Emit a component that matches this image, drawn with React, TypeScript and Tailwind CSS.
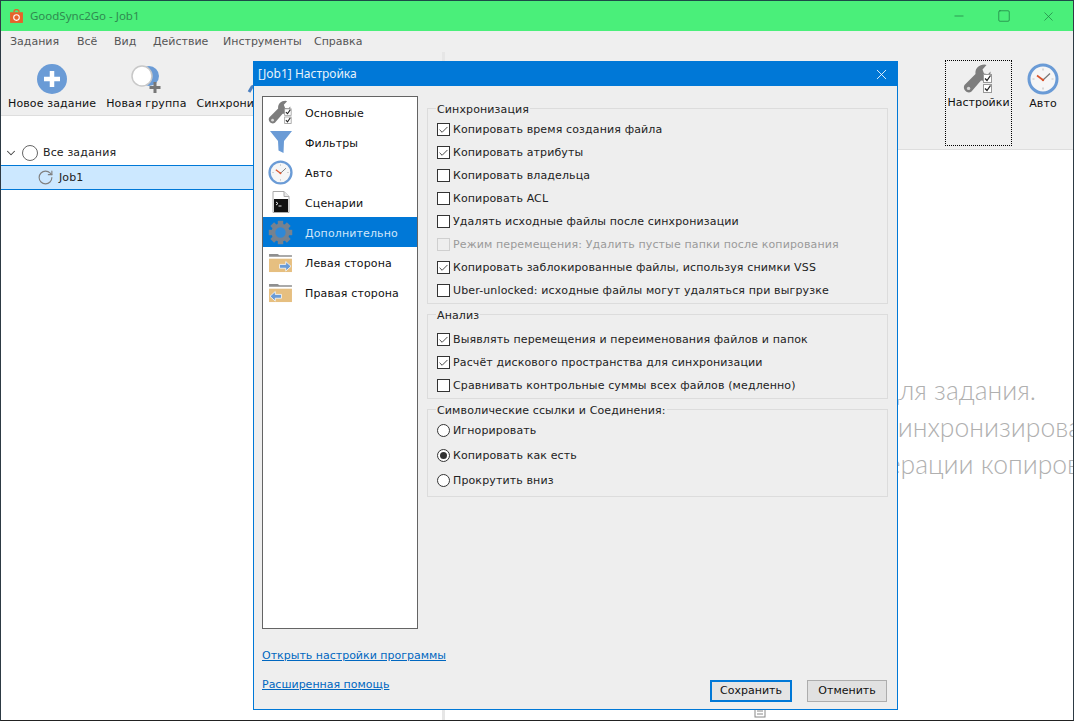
import { X, Minus, Square, ChevronDown, RotateCw, Check } from "lucide-react";

const syncOptions = [
  { label: "Копировать время создания файла", checked: true },
  { label: "Копировать атрибуты", checked: true },
  { label: "Копировать владельца" },
  { label: "Копировать ACL" },
  { label: "Удалять исходные файлы после синхронизации" },
  { label: "Режим перемещения: Удалить пустые папки после копирования", disabled: true },
  { label: "Копировать заблокированные файлы, используя снимки VSS", checked: true },
  { label: "Uber-unlocked: исходные файлы могут удаляться при выгрузке" },
];

const analysisOptions = [
  { label: "Выявлять перемещения и переименования файлов и папок", checked: true },
  { label: "Расчёт дискового пространства для синхронизации", checked: true },
  { label: "Сравнивать контрольные суммы всех файлов (медленно)" },
];

const menuItems = [
  { label: "Задания", width: "w-[67px]" },
  { label: "Всё", width: "w-[37px]" },
  { label: "Вид", width: "w-[39px]" },
  { label: "Действие", width: "w-[70px]" },
  { label: "Инструменты", width: "w-[91px]" },
  { label: "Справка", width: "w-[60px]" },
];

const MiniCheck = ({ x, y }: { x: number; y: number }) => (
  <g>
    <rect x={x} y={y} width="8" height="8" fill="#fff" stroke="#999" strokeWidth="1" />
    <path d={`M${x + 1.5} ${y + 4} l2 2 l3.5 -5`} fill="none" stroke="#222" strokeWidth="1.3" />
  </g>
);

const WrenchIcon = ({ className }: { className: string }) => (
  <svg viewBox="0 0 32 30" className={className}>
    <path
      d="M1.5 21 L12.5 10 C11.8 5 15.5 0.5 21.5 0.5 L23.5 1 L19.5 5.5 L21 9.5 L25 10.2 L27.5 7.5 C28 13 23.5 17.5 18 16.5 L8.5 27.5 C4.5 30.5 -1 25.5 1.5 21 Z"
      fill="#7d7d7d"
    />
    <circle cx="5.6" cy="24.4" r="1.7" fill="#d8d8d8" />
    <MiniCheck x={20.5} y={10.5} />
    <MiniCheck x={20.5} y={20.5} />
  </svg>
);

const ClockIcon = ({ className }: { className: string }) => (
  <svg viewBox="0 0 32 32" className={className}>
    <circle cx="16" cy="16" r="14" fill="#f6f6f6" stroke="#6a9bd6" strokeWidth="3" />
    <path d="M16 5.5v2M16 24.5v2M5.5 16h2M24.5 16h2" stroke="#c4c4c4" strokeWidth="1.2" />
    <path d="M16 17 L23 10.5" stroke="#777" strokeWidth="1.2" fill="none" />
    <path d="M10 12.5 L16 17" stroke="#d9532c" strokeWidth="1.6" fill="none" />
    <circle cx="16" cy="17" r="1.2" fill="#d9532c" />
  </svg>
);

const FilterIcon = () => (
  <svg viewBox="0 0 24 24" className="w-[24px] h-[24px]">
    <path d="M1 1 H23 L15 11 L14.5 23 L9.5 20.5 L9 11 Z" fill="#6a9bd6" />
  </svg>
);

const ScriptIcon = () => (
  <svg viewBox="0 0 18 22" className="w-[18px] h-[22px]">
    <path d="M1 .5 H12 L17 5.5 V21.5 H1 Z" fill="#fff" stroke="#aaa" />
    <path d="M12 .5 V5.5 H17" fill="#e8e8e8" stroke="#aaa" />
    <rect x="2" y="8" width="14" height="13" fill="#111" />
    <path d="M4 11 l2 1.5 l-2 1.5 M6.5 15 h3" stroke="#fff" strokeWidth="0.9" fill="none" />
  </svg>
);

const GearIcon = () => (
  <svg viewBox="0 0 26 26" className="w-[25px] h-[25px]">
    {[0, 45, 90, 135, 180, 225, 270, 315].map((deg) => (
      <rect key={deg} x="10.2" y="0.8" width="5.6" height="5" fill="#76828f" transform={`rotate(${deg} 13 13)`} />
    ))}
    <circle cx="13" cy="13" r="7.4" fill="#2f88d6" stroke="#76828f" strokeWidth="4" />
  </svg>
);

const FolderIcon = ({ flip }: { flip?: boolean }) => (
  <svg viewBox="0 0 26 22" className="w-[25px] h-[21px]">
    <path d="M1 2 H10 L12 3.5 H25 V5 H1 Z" fill="#8f8f8f" />
    <rect x="1" y="7" width="24" height="14" fill="#e6bf80" />
    {flip ? (
      <path d="M2 15 L7.5 10 V13 H14 V17 H7.5 V20 Z" fill="#6a9bd6" stroke="#fff" strokeWidth="0.8" />
    ) : (
      <path d="M24 15 L18.5 10 V13 H12 V17 H18.5 V20 Z" fill="#6a9bd6" stroke="#fff" strokeWidth="0.8" />
    )}
  </svg>
);

const NavItem = ({ icon, label, active }: { icon: React.ReactNode; label: string; active?: boolean }) => (
  <div className={`flex items-center h-[30px] ${active ? "bg-[#0078d7] text-[#cfe6fa]" : "text-[#111]"}`}>
    <div className="w-[32px] pl-[3px] flex items-center justify-center shrink-0">{icon}</div>
    <span className="ml-[10px] pt-[4px]">{label}</span>
  </div>
);

const CheckRow = ({ label, checked, disabled }: { label: string; checked?: boolean; disabled?: boolean }) => (
  <div className={`flex items-center h-[23px] pl-[9px] gap-[3px] ${disabled ? "text-[#9a9a9a]" : "text-[#222]"}`}>
    <span
      className={`w-[13px] h-[13px] border flex items-center justify-center shrink-0 ${
        disabled ? "border-[#cfcfcf] bg-[#eeeeee]" : "border-[#333] bg-white"
      }`}
    >
      {checked && <Check size={12} strokeWidth={1.8} className="text-[#222]" />}
    </span>
    <span className="whitespace-nowrap">{label}</span>
  </div>
);

const RadioRow = ({ label, checked }: { label: string; checked?: boolean }) => (
  <div className="flex items-center h-[25px] pl-[9px] gap-[3px] text-[#222]">
    <span className="w-[13px] h-[13px] rounded-full border border-[#333] bg-white flex items-center justify-center shrink-0">
      {checked && <span className="w-[7px] h-[7px] rounded-full bg-[#333]" />}
    </span>
    <span className="whitespace-nowrap">{label}</span>
  </div>
);

const Group = ({ title, children }: { title: string; children: React.ReactNode }) => (
  <fieldset className="border border-[#dcdcdc] pb-[1px]">
    <legend className="ml-[8px] px-[1px] h-[16px] pt-[3px] leading-[14px] text-[#222]">{title}</legend>
    <div className="pt-[2px]">{children}</div>
  </fieldset>
);

const ToolButton = ({ icon, label }: { icon: React.ReactNode; label: string }) => (
  <div className="flex flex-col items-center whitespace-nowrap">
    <div className="h-[32px] flex items-center justify-center">{icon}</div>
    <span className="mt-[2px] text-[#111]">{label}</span>
  </div>
);

export default function App() {
  return (
    <div className="relative w-[1074px] h-[721px] overflow-hidden flex flex-col border border-t-[#1d4a48] border-x-[#2d3a44] border-b-[#222] bg-white font-['DejaVu_Sans',sans-serif] text-[11px] leading-[14px] tracking-[0.13px]">
      {/* title bar */}
      <div className="h-[30px] shrink-0 bg-[#4aef7a] flex items-center text-[#2f8a50]">
        <svg viewBox="0 0 14 14" className="w-[15px] h-[15px] ml-[8px]">
          <path d="M1 3 H13 V13 H1 Z" fill="#e8622a" />
          <path d="M4.5 3 a2.5 2.5 0 0 1 5 0" fill="none" stroke="#e8622a" strokeWidth="1.2" />
          <circle cx="7" cy="8" r="2.6" fill="none" stroke="#fff" strokeWidth="1" />
        </svg>
        <span className="ml-[6px] text-[11.5px] tracking-normal font-['Noto_Sans',sans-serif]">GoodSync2Go - Job1</span>
        <div className="ml-auto flex items-center pr-[2px] text-[#1f7a42]">
          <div className="w-[45px] flex justify-center"><Minus size={14} strokeWidth={1.2} /></div>
          <div className="w-[45px] flex justify-center"><Square size={14} strokeWidth={1.2} /></div>
          <div className="w-[45px] flex justify-center"><X size={15} strokeWidth={1.1} /></div>
        </div>
      </div>

      {/* menu */}
      <div className="h-[21px] shrink-0 bg-[#efefef] flex items-center pl-[9px] text-[#555] tracking-normal">
        {menuItems.map((item) => (
          <span key={item.label} className={item.width}>{item.label}</span>
        ))}
      </div>

      <div className="flex flex-1 min-h-0">
        {/* left side */}
        <div className="w-[441px] shrink-0 flex flex-col">
          <div className="h-[64px] shrink-0 bg-[#efefef] border-b border-[#dedede] flex items-start gap-[10px] pl-[7px] pt-[11px]">
            <ToolButton
              label="Новое задание"
              icon={
                <svg viewBox="0 0 30 30" className="w-[30px] h-[30px]">
                  <circle cx="15" cy="15" r="15" fill="#6a9bd6" />
                  <path d="M15 7 V23 M7 15 H23" stroke="#fff" strokeWidth="4.5" />
                </svg>
              }
            />
            <ToolButton
              label="Новая группа"
              icon={
                <svg viewBox="0 0 32 30" className="w-[32px] h-[30px]">
                  <circle cx="19" cy="12" r="10" fill="#6a9bd6" />
                  <circle cx="12" cy="12" r="10" fill="#fff" stroke="#c8c8c8" strokeWidth="1.5" />
                  <path d="M25 18 V29 M19.5 23.5 H30.5" stroke="#777" strokeWidth="3" />
                </svg>
              }
            />
            <ToolButton
              label="Синхронизировать"
              icon={
                <svg viewBox="0 0 30 30" className="w-[30px] h-[30px]">
                  <path d="M12 28 L15 23 L19 21" fill="none" stroke="#4a7fc0" strokeWidth="3" />
                </svg>
              }
            />
          </div>
          <div className="flex-1 pt-[27px]">
            <div className="flex items-center h-[20px] pl-[3px] text-[#222]">
              <ChevronDown size={14} strokeWidth={1.8} className="text-[#444]" />
              <span className="ml-[4px] w-[16px] h-[16px] rounded-full border-[1.5px] border-[#666]" />
              <span className="ml-[5px]">Все задания</span>
            </div>
            <div className="mt-[2px] h-[25px] bg-[#cce8ff] border-y border-r border-[#0078d7] flex items-center pl-[36px] text-[#222]">
              <RotateCw size={17} strokeWidth={1.6} className="text-[#808080]" />
              <span className="ml-[5px]">Job1</span>
            </div>
          </div>
        </div>

        <div className="w-[3px] shrink-0 bg-[#e6e6e6]" />

        {/* right side */}
        <div className="flex-1 min-w-0 flex flex-col">
          <div className="h-[98px] shrink-0 bg-[#efefef] border-b border-[#dedede] flex items-start justify-end pt-[8px] pr-[14px] gap-[15px]">
            <div className="w-[67px] h-[86px] border border-dotted border-black flex flex-col items-center pt-[3px] text-[#111] tracking-normal">
              <WrenchIcon className="w-[32px] h-[30px]" />
              <span className="mt-[2px]">Настройки</span>
            </div>
            <div className="flex flex-col items-center pt-[3px] text-[#111] w-[32px]">
              <ClockIcon className="w-[32px] h-[32px] shrink-0" />
              <span className="mt-[2px]">Авто</span>
            </div>
          </div>
          <div className="relative flex-1 pt-[222px] flex flex-col items-end whitespace-nowrap font-['Lato',sans-serif] font-light text-[26.5px] leading-[37px] tracking-normal text-[#b0b0b0] overflow-hidden">
            <span className="pr-[37px]">для задания.</span>
            <span className="-mr-[8px]">синхронизирова</span>
            <span className="-mr-[7px]">операции копиров</span>
            <svg viewBox="0 0 12 12" className="absolute left-[309px] bottom-[2px] w-[12px] h-[12px]">
              <rect x="1" y="2" width="10" height="9" fill="#fff" stroke="#888" />
              <path d="M3 5 H9 M3 8 H9" stroke="#888" />
            </svg>
          </div>
        </div>
      </div>

      {/* settings dialog */}
      <div className="absolute left-[252px] top-[60px] w-[645px] h-[649px] border border-[#0078d7] bg-[#eeeeee] flex flex-col">
        <div className="h-[24px] shrink-0 bg-[#0078d7] flex items-center pl-[4px] text-[12px] tracking-normal font-['Noto_Sans',sans-serif] text-[#e6f2fb]">
          <span>[Job1] Настройка</span>
          <X size={17} strokeWidth={1.2} className="ml-auto mr-[7px] text-white" />
        </div>
        <div className="flex-1 min-h-0 flex flex-col px-[8px] pt-[10px] pb-[7px]">
          <div className="flex gap-[9px] h-[533px] shrink-0">
            <div className="w-[156px] shrink-0 bg-white border border-[#646464]">
              <NavItem icon={<WrenchIcon className="w-[26px] h-[25px]" />} label="Основные" />
              <NavItem icon={<FilterIcon />} label="Фильтры" />
              <NavItem icon={<ClockIcon className="w-[25px] h-[25px]" />} label="Авто" />
              <NavItem icon={<ScriptIcon />} label="Сценарии" />
              <NavItem icon={<GearIcon />} label="Дополнительно" active />
              <NavItem icon={<FolderIcon />} label="Левая сторона" />
              <NavItem icon={<FolderIcon flip />} label="Правая сторона" />
            </div>
            <div className="w-[461px] pt-[4px] flex flex-col gap-[2px]">
              <Group title="Синхронизация">
                {syncOptions.map((o) => (
                  <CheckRow key={o.label} {...o} />
                ))}
              </Group>
              <Group title="Анализ">
                <div className="pt-[4px]">
                  {analysisOptions.map((o) => (
                    <CheckRow key={o.label} {...o} />
                  ))}
                </div>
              </Group>
              <Group title="Символические ссылки и Соединения:">
                <div className="-mt-[1px] pb-[2px]">
                  <RadioRow label="Игнорировать" />
                  <RadioRow label="Копировать как есть" checked />
                  <RadioRow label="Прокрутить вниз" />
                </div>
              </Group>
            </div>
          </div>
          <div className="flex-1 flex justify-between">
            <div className="flex flex-col gap-[15px] pt-[20px] text-[#0067c0] underline tracking-normal">
              <span>Открыть настройки программы</span>
              <span>Расширенная помощь</span>
            </div>
            <div className="self-end flex gap-[15px] pr-[2px] text-[#111] tracking-normal">
              <div className="w-[82px] h-[22px] border-2 border-[#0078d7] bg-[#e4e4e4] flex items-center justify-center">
                Сохранить
              </div>
              <div className="w-[80px] h-[22px] border border-[#adadad] bg-[#e1e1e1] flex items-center justify-center">
                Отменить
              </div>
            </div>
          </div>
        </div>
      </div>
    </div>
  );
}
